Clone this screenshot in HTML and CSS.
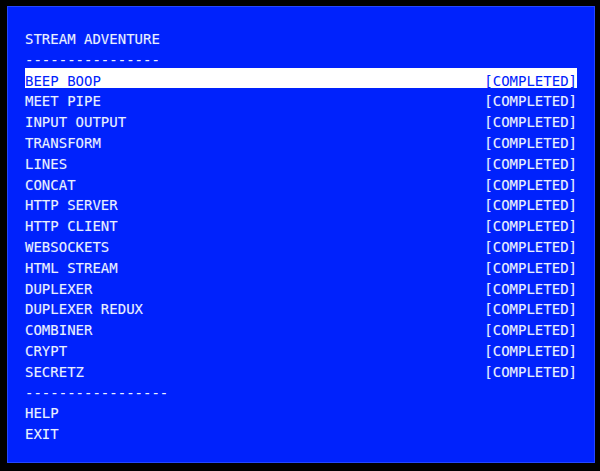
FILE: index.html
```html
<!DOCTYPE html>
<html>
<head>
<meta charset="utf-8">
<link rel="stylesheet" href="styles.css">
</head>
<body>
<div class="screen">
  <div class="line">STREAM ADVENTURE</div>
  <div class="line">----------------</div>
  <div class="row selected"><span>BEEP BOOP</span><span>[COMPLETED]</span></div>
  <div class="row"><span>MEET PIPE</span><span>[COMPLETED]</span></div>
  <div class="row"><span>INPUT OUTPUT</span><span>[COMPLETED]</span></div>
  <div class="row"><span>TRANSFORM</span><span>[COMPLETED]</span></div>
  <div class="row"><span>LINES</span><span>[COMPLETED]</span></div>
  <div class="row"><span>CONCAT</span><span>[COMPLETED]</span></div>
  <div class="row"><span>HTTP SERVER</span><span>[COMPLETED]</span></div>
  <div class="row"><span>HTTP CLIENT</span><span>[COMPLETED]</span></div>
  <div class="row"><span>WEBSOCKETS</span><span>[COMPLETED]</span></div>
  <div class="row"><span>HTML STREAM</span><span>[COMPLETED]</span></div>
  <div class="row"><span>DUPLEXER</span><span>[COMPLETED]</span></div>
  <div class="row"><span>DUPLEXER REDUX</span><span>[COMPLETED]</span></div>
  <div class="row"><span>COMBINER</span><span>[COMPLETED]</span></div>
  <div class="row"><span>CRYPT</span><span>[COMPLETED]</span></div>
  <div class="row"><span>SECRETZ</span><span>[COMPLETED]</span></div>
  <div class="line">-----------------</div>
  <div class="line">HELP</div>
  <div class="line">EXIT</div>
</div>
</body>
</html>
```
FILE: styles.css
```css
html, body {
  margin: 0;
  padding: 0;
  background: #000;
  width: 600px;
  height: 471px;
  overflow: hidden;
}
body {
  padding: 6px 0 0 7px;
  box-sizing: border-box;
}
.screen {
  width: 588px;
  height: 457px;
  box-sizing: border-box;
  background: #0022fc;
  border: 1px solid #2447ff;
  padding: 22px 17px 0 17px;
  font-family: "DejaVu Sans Mono", monospace;
  font-size: 14px;
  line-height: 20.8px;
  color: #eaf0ff;
  text-shadow: 0 0 1px rgba(150, 180, 255, 0.4);
}
.line, .row {
  height: 20.8px;
  white-space: pre;
}
.row {
  display: flex;
  justify-content: space-between;
}
.selected {
  height: 17.8px;
  padding-top: 3px;
  margin: -3px 0 3px;
  background: #ffffff;
  color: #0022fc;
  text-shadow: none;
}
```
